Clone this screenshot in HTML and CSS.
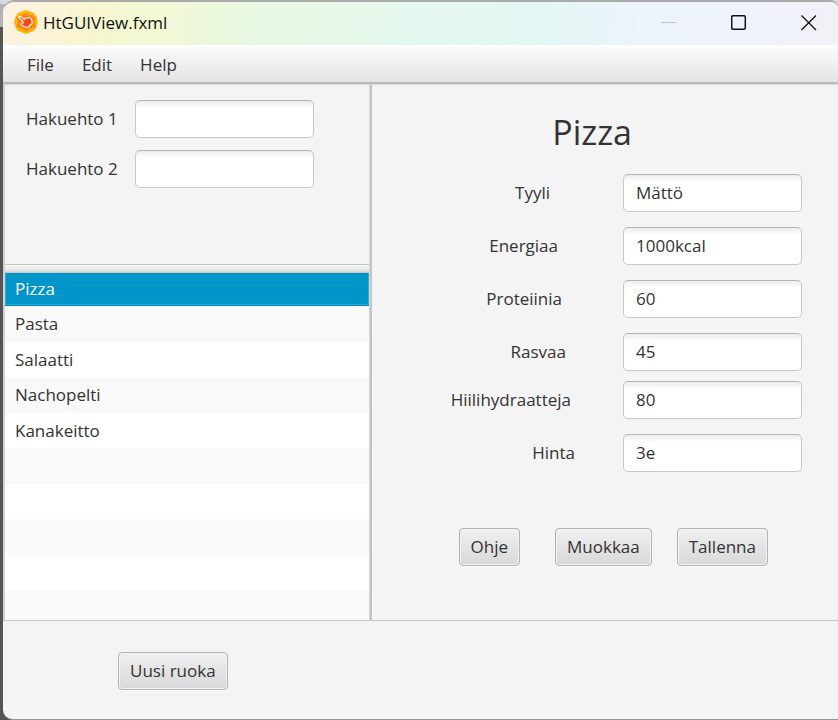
FILE: index.html
```html
<!DOCTYPE html>
<html lang="fi">
<head>
<meta charset="utf-8">
<title>HtGUIView.fxml</title>
<link rel="stylesheet" href="styles.css">
</head>
<body>
<div class="window">
  <header class="titlebar">
    <svg class="app-icon" viewBox="0 0 24 24" aria-hidden="true">
      <path d="M12 0 16 1.500 20 3 22.500 7 24 12 22.500 17 20 21 16 22.500 12 24 8 22.500 4 21 1.500 17 0 12 1.500 7 4 3 8 1.500Z" fill="#fbb50e"/>
      <path d="M12 3 16 5 22 7 20 12 22 17 16 19 12 22 8 19 2 17 4 12 2 7 8 5Z" fill="#f98a0b"/>
      <circle cx="12" cy="12" r="6" fill="#f9700f"/>
      <path d="M4.800 7.300Q5.500 6 7 6.800L10.300 9.500 11 7.800 13 8.500 15 7.300 17 8.500 18.500 13 15.500 15.500 14.500 17.500 9.500 16.500 7 14 8.500 13 9.500 12.500Z" fill="#f2491b" stroke="#fff3e4" stroke-width="1.200" stroke-linejoin="round"/>
    </svg>
    <h1 class="window-title">HtGUIView.fxml</h1>
    <div class="window-controls">
      <button type="button" class="control" aria-label="Minimize"><svg viewBox="0 0 16 16"><path d="M0 7.500H15" stroke="#bfc2c6"/></svg></button>
      <button type="button" class="control" aria-label="Maximize"><svg viewBox="0 0 16 16"><rect x=".7" y=".7" width="13.600" height="13.600" rx="1.500" fill="none" stroke="#111" stroke-width="1.500"/></svg></button>
      <button type="button" class="control" aria-label="Close"><svg viewBox="0 0 16 16"><path d="M.5.500 15 15M15 .5.500 15" stroke="#111" stroke-width="1.300"/></svg></button>
    </div>
  </header>
  <nav class="menubar">
    <button type="button">File</button>
    <button type="button">Edit</button>
    <button type="button">Help</button>
  </nav>
  <main class="split">
    <section class="side">
      <form class="search">
        <label for="haku1">Hakuehto 1</label><input id="haku1" type="text">
        <label for="haku2">Hakuehto 2</label><input id="haku2" type="text">
      </form>
      <div class="divider"></div>
      <ul class="list">
        <li class="selected">Pizza</li>
        <li>Pasta</li>
        <li>Salaatti</li>
        <li>Nachopelti</li>
        <li>Kanakeitto</li>
        <li></li>
        <li></li>
        <li></li>
        <li></li>
        <li></li>
      </ul>
    </section>
    <section class="detail">
      <h2>Pizza</h2>
      <form class="fields">
        <div class="group">
          <div class="row inset-6"><label for="tyyli">Tyyli</label><input id="tyyli" type="text" value="Mättö"></div>
          <div class="row inset-5"><label for="energiaa">Energiaa</label><input id="energiaa" type="text" value="1000kcal"></div>
          <div class="row inset-4"><label for="proteiinia">Proteiinia</label><input id="proteiinia" type="text" value="60"></div>
          <div class="row inset-3"><label for="rasvaa">Rasvaa</label><input id="rasvaa" type="text" value="45"></div>
        </div>
        <div class="group">
          <div class="row inset-2"><label for="hiili">Hiilihydraatteja</label><input id="hiili" type="text" value="80"></div>
          <div class="row"><label for="hinta">Hinta</label><input id="hinta" type="text" value="3e"></div>
        </div>
      </form>
      <div class="actions">
        <button type="button" class="button">Ohje</button>
        <button type="button" class="button wide-gap">Muokkaa</button>
        <button type="button" class="button">Tallenna</button>
      </div>
    </section>
  </main>
  <footer class="bottom">
    <button type="button" class="button">Uusi ruoka</button>
  </footer>
</div>
</body>
</html>
```
FILE: styles.css
```css
* {
  box-sizing: border-box;
}

body {
  margin: 0;
  background: linear-gradient(#d9d9e2 0 4px, #b4b4b6 4px 27px, #555 27px);
  color: #333;
  font: 17px/24px "Open Sans", "Noto Sans", sans-serif;
}

button,
input {
  font: inherit;
  color: inherit;
}

h1,
h2,
ul {
  margin: 0;
  padding: 0;
  font-weight: 400;
}

.window {
  display: flex;
  flex-direction: column;
  min-height: 100vh;
  margin-left: 3px;
  border-top: 2px solid #a9a9a9;
  border-bottom: 1px solid #999;
  border-radius: 12px 8px 0 10px;
  background: #f4f4f4;
  overflow: hidden;
}

.titlebar {
  display: flex;
  align-items: center;
  height: 43px;
  padding-left: 11px;
  background: linear-gradient(100deg, #fbf2e2 0, #f8f5d0 10%, #f2f8d2 17%, #e9f8e2 30%, #e5f8ee 48%, #e4f6f5 66%, #edf3fb 77%, #eef2fb 90%, #f2f1f7);
}

.app-icon {
  width: 24px;
  height: 24px;
  margin: 0 5px 3px 0;
}

.window-title {
  flex: 1;
  padding-bottom: 2px;
  color: #111;
  font-size: 17px;
  line-height: 24px;
}

.window-controls {
  display: flex;
  gap: 12px;
}

.control {
  display: flex;
  align-items: center;
  justify-content: center;
  width: 58px;
  height: 42px;
  padding: 0 1px 2px 0;
  border: 0;
  background: none;
}

.control svg {
  width: 16px;
  height: 16px;
  fill: none;
}

.menubar {
  display: flex;
  gap: 4px;
  padding: 8px 12px 5px;
  background: linear-gradient(#fdfdfd, #e3e3e3);
  border-bottom: 2px solid #b9b9b9;
}

.menubar button {
  padding: 0 12px;
  border: 0;
  background: none;
}

.split {
  display: flex;
  flex: 1;
  border-bottom: 1px solid #c8c8c8;
}

.side {
  display: flex;
  flex-direction: column;
  flex: 0 0 44%;
  border-left: 2px solid #d2d2d2;
  border-right: 1px solid #d8d8d8;
  border-top: 1px solid #d8d8d8;
}

.search {
  display: grid;
  grid-template-columns: 109px 179px;
  gap: 12px 0;
  align-items: center;
  padding: 15px 0 76px 21px;
}

input {
  width: 179px;
  height: 38px;
  padding: 0 12px 1px;
  border: 1px solid #c8c8c8;
  border-top-color: #b5b5b5;
  border-radius: 5px;
  background: linear-gradient(#ececec, #fff 7px);
  outline: 0;
}

.divider {
  height: 9px;
  border-top: 1px solid #c4c4c4;
  border-bottom: 1px solid #c8c8c8;
  background: linear-gradient(#fafafa, #dcdcdc);
}

.list {
  flex: 1;
  list-style: none;
  background: #f9f9f9;
}

.list li {
  height: 35px;
  padding: 6px 10px;
  background: #fff;
}

.list li:nth-child(even) {
  height: 36px;
  background: #f9f9f9;
}

.list .selected {
  height: 33px;
  padding: 4px 10px;
  background: #0096c9;
  border-bottom: 1px solid #0086b8;
  box-shadow: inset -1px -1px #2ba9d6, inset 1px 0 #2ba9d6;
  color: #fff;
}

.list li:last-child {
  height: 30px;
}

.detail {
  flex: 1;
  padding: 23px 36px 54px 0;
  border-left: 2px solid #c4c4c4;
  border-top: 1px solid #d8d8d8;
}

.detail h2 {
  padding-right: 170px;
  font-size: 34px;
  line-height: 48px;
  text-align: right;
}

.fields {
  display: flex;
  flex-direction: column;
  gap: 10px;
  padding-top: 18px;
}

.group {
  display: flex;
  flex-direction: column;
  gap: 15px;
}

.row {
  display: flex;
  align-items: center;
  justify-content: flex-end;
  gap: 48px;
}

.inset-2 { gap: 52px; }
.inset-3 { gap: 57px; }
.inset-4 { gap: 61px; }
.inset-5 { gap: 65px; }
.inset-6 { gap: 73px; }

.actions {
  display: flex;
  justify-content: flex-end;
  gap: 25px;
  padding: 56px 34px 0 0;
}

.button {
  height: 38px;
  padding: 0 11px;
  border: 1px solid #b2b2b2;
  border-radius: 4px;
  background: linear-gradient(#f0f0f0, #d8d8d8);
  box-shadow: inset 0 0 0 1px #f4f4f4, 0 1px #fbfbfb;
}

.wide-gap {
  margin-left: 10px;
}

.bottom {
  padding: 31px 115px 29px;
}
```
